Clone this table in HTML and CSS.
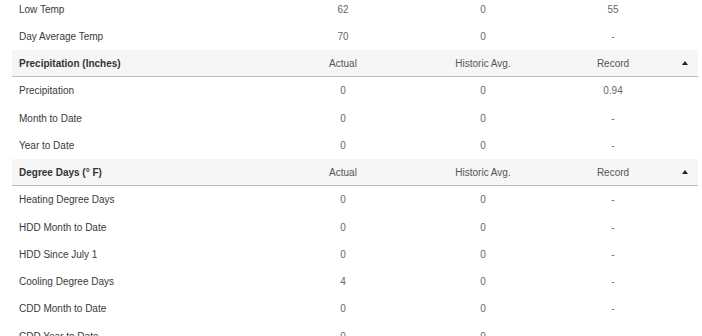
FILE: index.html
```html
<!DOCTYPE html>
<html>
<head>
<meta charset="utf-8">
<link rel="stylesheet" href="styles.css">
</head>
<body>
<div class="table">
  <div class="row"><div class="label">Low Temp</div><div class="cell">62</div><div class="cell">0</div><div class="cell">55</div><div></div></div>
  <div class="row"><div class="label">Day Average Temp</div><div class="cell">70</div><div class="cell">0</div><div class="cell">-</div><div></div></div>
  <div class="row head"><div class="label">Precipitation (Inches)</div><div class="cell">Actual</div><div class="cell">Historic Avg.</div><div class="cell">Record</div><div class="caret"><span class="tri"></span></div></div>
  <div class="row"><div class="label">Precipitation</div><div class="cell">0</div><div class="cell">0</div><div class="cell">0.94</div><div></div></div>
  <div class="row"><div class="label">Month to Date</div><div class="cell">0</div><div class="cell">0</div><div class="cell">-</div><div></div></div>
  <div class="row"><div class="label">Year to Date</div><div class="cell">0</div><div class="cell">0</div><div class="cell">-</div><div></div></div>
  <div class="row head"><div class="label">Degree Days (° F)</div><div class="cell">Actual</div><div class="cell">Historic Avg.</div><div class="cell">Record</div><div class="caret"><span class="tri"></span></div></div>
  <div class="row"><div class="label">Heating Degree Days</div><div class="cell">0</div><div class="cell">0</div><div class="cell">-</div><div></div></div>
  <div class="row"><div class="label">HDD Month to Date</div><div class="cell">0</div><div class="cell">0</div><div class="cell">-</div><div></div></div>
  <div class="row"><div class="label">HDD Since July 1</div><div class="cell">0</div><div class="cell">0</div><div class="cell">-</div><div></div></div>
  <div class="row"><div class="label">Cooling Degree Days</div><div class="cell">4</div><div class="cell">0</div><div class="cell">-</div><div></div></div>
  <div class="row"><div class="label">CDD Month to Date</div><div class="cell">0</div><div class="cell">0</div><div class="cell">-</div><div></div></div>
  <div class="row"><div class="label">CDD Year to Date</div><div class="cell">0</div><div class="cell">0</div><div class="cell">-</div><div></div></div>
</div>
</body>
</html>
```
FILE: styles.css
```css
html, body {
  margin: 0;
  padding: 0;
  background: #fff;
  overflow: hidden;
}
body {
  font-family: "Liberation Sans", Arial, sans-serif;
  font-size: 10px;
  color: #444;
}
.table {
  margin: -4.6px 4px 0 12px;
  display: flex;
  flex-direction: column;
}
.row {
  display: grid;
  grid-template-columns: 261px 140px 140px 120px 1fr;
  align-items: center;
  height: 27.25px;
  box-sizing: border-box;
}
.label {
  padding-left: 7px;
  color: #3a3a3a;
}
.cell {
  text-align: center;
  color: #666;
}
.head {
  background: #f6f6f6;
  border-bottom: 1px solid #bdbdbd;
}
.head .label {
  font-weight: bold;
  color: #333;
}
.head .cell {
  color: #555;
}
.caret {
  display: flex;
  justify-content: center;
  align-items: center;
}
.tri {
  width: 0;
  height: 0;
  border-left: 3px solid transparent;
  border-right: 3px solid transparent;
  border-bottom: 4px solid #222;
  margin-right: 2px;
}
```
